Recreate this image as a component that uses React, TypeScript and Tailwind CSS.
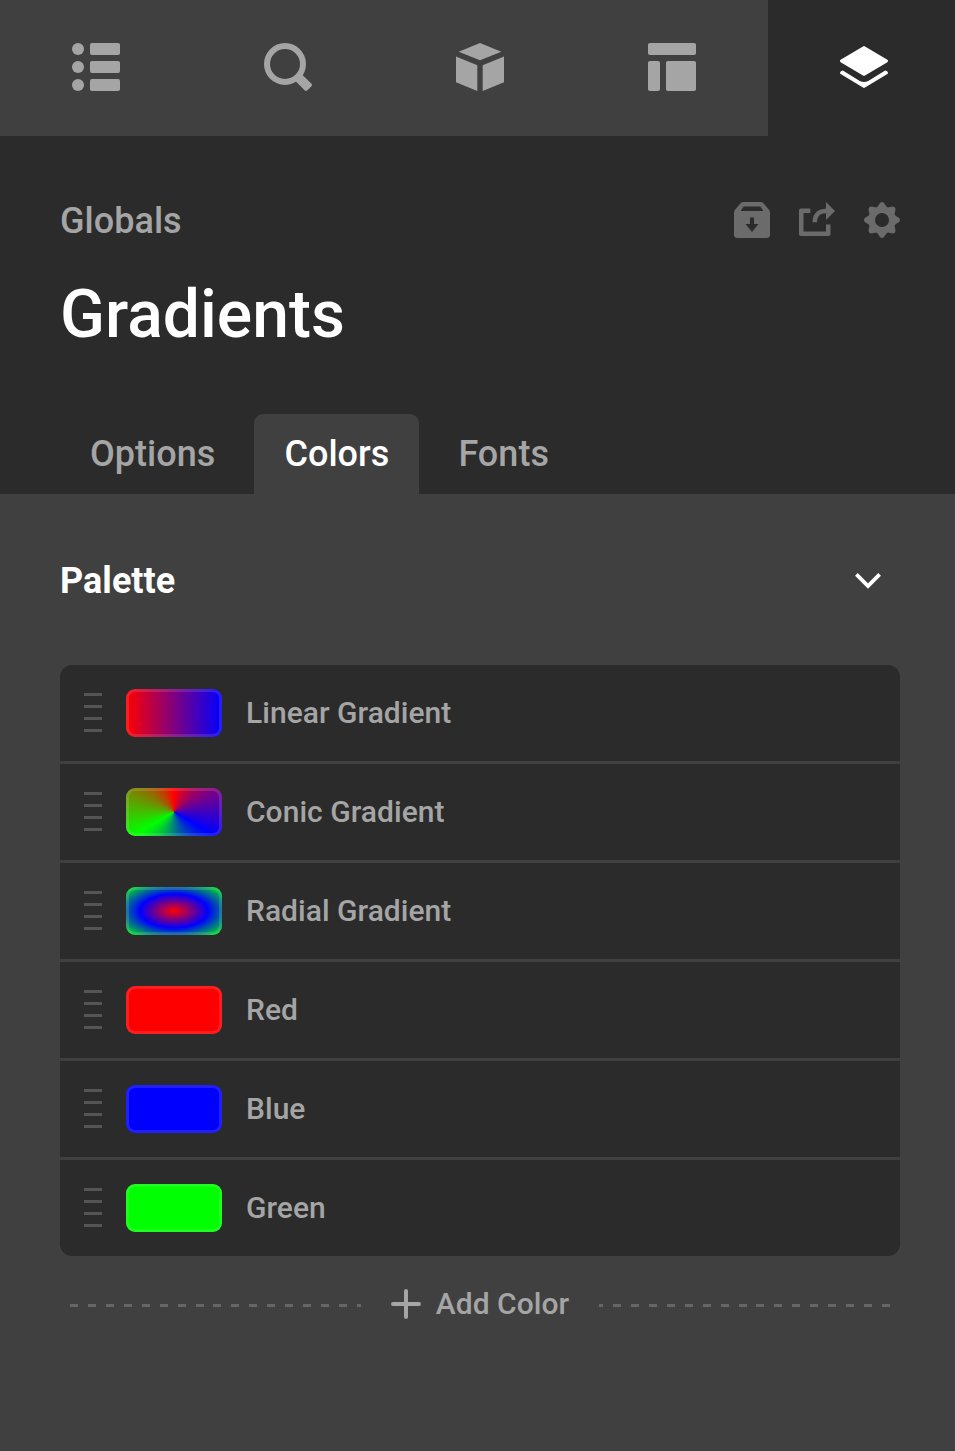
import { useState, type ReactNode } from "react";

interface PaletteColor {
    name: string;
    swatch: string;
}

const palette: PaletteColor[] = [
    { name: "Linear Gradient", swatch: "bg-[linear-gradient(90deg,#f00,#00f)]" },
    { name: "Conic Gradient", swatch: "bg-[conic-gradient(#f00,#00f,#0f0,#f00)]" },
    { name: "Radial Gradient", swatch: "bg-[radial-gradient(#f00,#00f,#0f0)]" },
    { name: "Red", swatch: "bg-[#f00]" },
    { name: "Blue", swatch: "bg-[#00f]" },
    { name: "Green", swatch: "bg-[#0f0]" },
];

const tabs = ["Options", "Colors", "Fonts"];

const navItems: { label: string; icon: ReactNode }[] = [
    {
        label: "Outline",
        icon: (
            <>
                <circle cx="6" cy="6" r="6" />
                <circle cx="6" cy="24" r="6" />
                <circle cx="6" cy="42" r="6" />
                <rect x="18" width="30" height="12" rx="2" />
                <rect x="18" y="18" width="30" height="12" rx="2" />
                <rect x="18" y="36" width="30" height="12" rx="2" />
            </>
        ),
    },
    {
        label: "Search",
        icon: (
            <>
                <circle cx="21" cy="21" r="18" fill="none" stroke="currentColor" strokeWidth="6" />
                <path d="M38 31.4l9.3 9.2q1.3 1.4 0 2.8l-3.9 3.9q-1.4 1.3-2.8 0L31.4 38z" />
            </>
        ),
    },
    {
        label: "Elements",
        icon: (
            <>
                <path d="M24 0l21.3 8.7L24 17.3 2.7 8.7z" />
                <path d="M0 13.6l21.3 8.7V48L0 39.3z" />
                <path d="M48 13.6l-21.3 8.7V48L48 39.3z" />
            </>
        ),
    },
    {
        label: "Layout",
        icon: (
            <>
                <rect width="48" height="12" rx="2" />
                <rect y="18" width="12" height="30" rx="2" />
                <rect x="18" y="18" width="30" height="30" rx="2" />
            </>
        ),
    },
    {
        label: "Globals",
        icon: (
            <>
                <path d="M23 3.4q1-.6 2 0l22.4 13.4q1.2 1.2 0 2.4L25 32.6q-1 .6-2 0L.6 19.2q-1.2-1.2 0-2.4z" />
                <path d="M2.8 27.4L19.8 38q4.2 2 8.4 0l17-10.6q2.6.2 2.8 2.4 0 .7-.6 1.2L25 44.6q-1 .6-2 0L.6 31q-.6-.5-.6-1.2.2-2.2 2.8-2.4z" />
            </>
        ),
    },
];

// Outline of the settings cog, eight rounded teeth
const cogPath =
    Array.from({ length: 96 }, (_, i) => {
        const angle = (i / 96) * Math.PI * 2;
        const radius = 15.9 + 2.1 * Math.cos(angle * 8);
        const x = 18 + radius * Math.cos(angle);
        const y = 18 + radius * Math.sin(angle);
        return `${i === 0 ? "M" : "L"}${x.toFixed(2)} ${y.toFixed(2)}`;
    }).join("") + "ZM25 18a7 7 0 1 0-14 0a7 7 0 1 0 14 0Z";

const headerActions = [
    {
        label: "Library",
        path: "M9 0H27Q28.4 0 29.2 1L35.2 8Q36 9 36 10.5V32.5Q36 36 32.5 36H3.5Q0 36 0 32.5V10.5Q0 9 .8 8L6.8 1Q7.6 0 9 0ZM9.6 4.5L6.6 9H29.4L26.4 4.5ZM16 15.5V22H11.5L18 30L24.5 22H20V15.5Z",
    },
    {
        label: "Share",
        path: "M2 6.5H11.3V11H4.5V29.5H27V22.5H31.5V32Q31.5 34 29.5 34H2Q0 34 0 32V8.5Q0 6.5 2 6.5ZM13.5 20.3C13.5 11 19.5 6.8 27 6.8V0L36 9L27 18V11.3C21 11.3 18 14.6 18 20.3Z",
    },
    { label: "Settings", path: cogPath },
];

function DragHandle() {
    return (
        <div className="flex w-[18px] flex-col gap-[9px] pb-0.5">
            <span className="h-[3px] bg-[#555]" />
            <span className="h-[3px] bg-[#555]" />
            <span className="h-[3px] bg-[#555]" />
            <span className="h-[3px] bg-[#555]" />
        </div>
    );
}

export default function App() {
    const [activeNav, setActiveNav] = useState("Globals");
    const [activeTab, setActiveTab] = useState("Colors");
    const [isOpen, setIsOpen] = useState(true);

    return (
        <div className="h-[1451px] w-full overflow-hidden bg-[#404040] font-['Roboto',sans-serif] font-medium tracking-[0.03px] text-[#a5a5a5]">
            <div className="w-[960px]">
                {/* Top navigation */}
                <nav className="flex h-[136px]">
                    {navItems.map((item) => (
                        <button
                            key={item.label}
                            aria-label={item.label}
                            onClick={() => setActiveNav(item.label)}
                            className={`flex w-48 items-center justify-center ${
                                activeNav === item.label ? "bg-[#2b2b2b] text-white" : "bg-[#404040]"
                            }`}
                        >
                            <svg className="-mt-0.5 size-12" viewBox="0 0 48 48" fill="currentColor">
                                {item.icon}
                            </svg>
                        </button>
                    ))}
                </nav>

                {/* Header */}
                <header className="flex h-[358px] flex-col bg-[#2b2b2b] px-[60px] pt-[60px]">
                    <div className="flex h-12 items-center justify-between">
                        <span className="pt-0.5 text-4xl">Globals</span>
                        <div className="flex gap-[29px] text-[#6b6b6b]">
                            {headerActions.map((action) => (
                                <button key={action.label} aria-label={action.label}>
                                    <svg className="size-9" viewBox="0 0 36 36" fill="currentColor" fillRule="evenodd">
                                        <path d={action.path} />
                                    </svg>
                                </button>
                            ))}
                        </div>
                    </div>
                    <h1 className="mt-[31px] text-[66px] leading-20 text-white">Gradients</h1>
                    <div className="mt-auto flex h-20 gap-[9px]">
                        {tabs.map((tab) => (
                            <button
                                key={tab}
                                onClick={() => setActiveTab(tab)}
                                className={`rounded-t-[9px] px-[30px] text-4xl ${
                                    activeTab === tab ? "bg-[#404040] text-white" : ""
                                }`}
                            >
                                {tab}
                            </button>
                        ))}
                    </div>
                </header>

                {/* Palette */}
                <main className="px-[60px] pt-[62px]">
                    <button
                        className="flex h-12 w-full items-center justify-between pr-4 text-4xl font-bold text-white"
                        onClick={() => setIsOpen(!isOpen)}
                    >
                        <span className="pt-0.5">Palette</span>
                        <svg className="size-8" viewBox="0 0 32 32" fill="none" stroke="currentColor" strokeWidth="3.8">
                            <path d="M4.4 10.4L16 22L27.6 10.4" />
                        </svg>
                    </button>

                    {isOpen && (
                        <>
                            <ul className="mt-[61px] flex flex-col gap-[3px] overflow-hidden rounded-xl">
                                {palette.map((color) => (
                                    <li key={color.name} className="flex h-24 items-center gap-6 bg-[#2b2b2b] px-6 text-3xl">
                                        <DragHandle />
                                        <span
                                            className={`h-12 w-24 rounded-[9px] inset-shadow-[0_0_0_3px_rgba(255,255,255,0.12)] ${color.swatch}`}
                                        />
                                        {color.name}
                                    </li>
                                ))}
                            </ul>

                            <button className="mt-6 flex h-12 w-full items-center px-2.5 text-3xl">
                                <span className="mt-[3px] h-[3px] flex-1 bg-[repeating-linear-gradient(to_right,#666_0_8px,transparent_8px_17.93px)]" />
                                <svg
                                    className="ml-[30px] mr-[15px] size-[30px]"
                                    viewBox="0 0 30 30"
                                    stroke="currentColor"
                                    strokeWidth="4"
                                    strokeLinecap="round"
                                >
                                    <path d="M15 2V28M2 15H28" />
                                </svg>
                                Add Color
                                <span className="ml-[30px] mt-[3px] h-[3px] flex-1 bg-[repeating-linear-gradient(to_left,#666_0_8px,transparent_8px_17.93px)]" />
                            </button>
                        </>
                    )}
                </main>
            </div>
        </div>
    );
}
